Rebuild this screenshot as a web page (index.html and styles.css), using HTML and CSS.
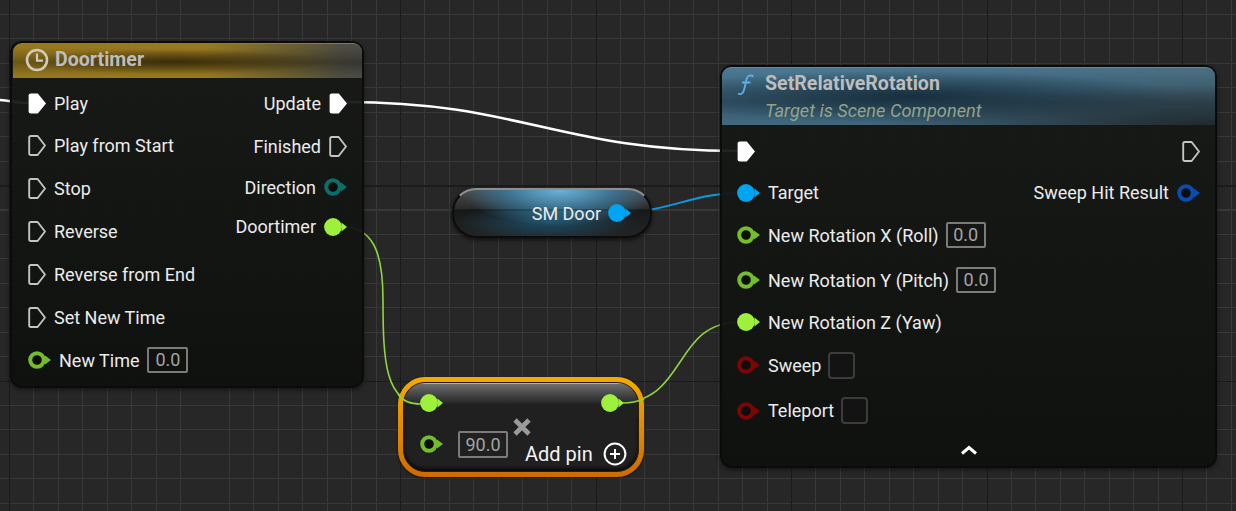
FILE: index.html
```html
<!DOCTYPE html>
<html lang="en">
<head>
<meta charset="utf-8">
<title>Blueprint graph</title>
<link rel="stylesheet" href="styles.css">
</head>
<body>
<svg class="defs" width="0" height="0" aria-hidden="true">
  <symbol id="exec" viewBox="0 0 18 21"><path d="M1.2 2.6Q1.2 1 2.8 1H9.6L17 10.5L9.6 20H2.8Q1.2 20 1.2 18.4Z" fill="none" stroke="#c4c4c4" stroke-width="1.9" stroke-linejoin="round"/></symbol>
  <symbol id="exec-on" viewBox="0 0 18 21"><path d="M.6 2.5Q.6 .4 2.8 .4H9.8L18 10.5L9.8 20.6H2.8Q.6 20.6 .6 18.5Z" fill="#fff"/></symbol>
  <symbol id="data" viewBox="0 0 23 18"><path d="M17.5 4.5L23 9L17.5 13.5Z" fill="currentColor"/><circle cx="9" cy="9" r="8.9" fill="currentColor"/></symbol>
  <symbol id="data-off" viewBox="0 0 23 18"><path d="M17 4.5L23 9L17 13.5Z" fill="currentColor"/><circle cx="9" cy="9" r="6.8" fill="#0c0e0c" stroke="currentColor" stroke-width="4"/></symbol>
</svg>
<main class="canvas">
  <svg class="wires" width="1236" height="511" viewBox="0 0 1236 511" fill="none" aria-hidden="true">
    <path d="M0 100C12 101 18 103 30 103" stroke="#fff" stroke-width="2.5"/>
    <path d="M346 102C520 102 560 151 738 151" stroke="#fff" stroke-width="2.5"/>
    <path d="M620 212C672 212 690 193 740 193" stroke="#0a9ae0" stroke-width="2"/>
    <path d="M342 227C372 227 383 250 383 300C383 360 385 404 422 404" stroke="#8ed63a" stroke-width="1.6"/>
    <path d="M618 403C688 403 672 322 740 322" stroke="#8ed63a" stroke-width="1.6"/>
  </svg>

  <section class="node timer">
    <header class="head head-timer">
      <svg class="icon-clock" width="24" height="24" viewBox="0 0 24 24" fill="none" stroke="#cfcbb8"><circle cx="12" cy="12" r="10" stroke-width="2.6"/><path d="M12 5.5V12.6H18" stroke-width="2.2"/></svg>
      <h2 class="title">Doortimer</h2>
    </header>
    <div class="body body-timer">
      <div class="col col-timer-in">
        <div class="row"><svg class="pin-exec"><use href="#exec-on"/></svg><span>Play</span></div>
        <div class="row"><svg class="pin-exec"><use href="#exec"/></svg><span>Play from Start</span></div>
        <div class="row"><svg class="pin-exec"><use href="#exec"/></svg><span>Stop</span></div>
        <div class="row"><svg class="pin-exec"><use href="#exec"/></svg><span>Reverse</span></div>
        <div class="row"><svg class="pin-exec"><use href="#exec"/></svg><span>Reverse from End</span></div>
        <div class="row"><svg class="pin-exec"><use href="#exec"/></svg><span>Set New Time</span></div>
        <div class="row"><svg class="pin-data green"><use href="#data-off"/></svg><span>New Time</span><span class="field">0.0</span></div>
      </div>
      <div class="col col-timer-out">
        <div class="row"><span>Update</span><svg class="pin-exec"><use href="#exec-on"/></svg></div>
        <div class="row"><span>Finished</span><svg class="pin-exec"><use href="#exec"/></svg></div>
        <div class="row"><span>Direction</span><svg class="pin-data teal"><use href="#data-off"/></svg></div>
        <div class="row"><span>Doortimer</span><svg class="pin-data lime"><use href="#data"/></svg></div>
      </div>
    </div>
  </section>

  <section class="pill">
    <span>SM Door</span><svg class="pin-data blue"><use href="#data"/></svg>
  </section>

  <section class="add">
    <div class="add-inner">
      <div class="add-top">
        <svg class="pin-data lime"><use href="#data"/></svg>
        <svg class="pin-data lime"><use href="#data"/></svg>
      </div>
      <div class="add-bottom">
        <svg class="pin-data green"><use href="#data-off"/></svg>
        <span class="field field-wide">90.0</span>
        <svg class="icon-x" width="18" height="18" viewBox="0 0 18 18"><path d="M2 2L16 16M16 2L2 16" stroke="#9a9a9a" stroke-width="4.6"/></svg>
        <div class="add-pin"><span>Add pin</span><svg width="24" height="24" viewBox="0 0 24 24" fill="none" stroke="#fff" stroke-width="2"><circle cx="12" cy="12" r="10.4"/><path d="M12 7V17M7 12H17"/></svg></div>
      </div>
    </div>
  </section>
  <svg class="wires" width="1236" height="511" viewBox="0 0 1236 511" fill="none" aria-hidden="true">
    <path d="M398 394C403 402 411 404 421 404" stroke="#8ed63a" stroke-width="1.6"/>
    <path d="M623 403C630 403 636 402 644 399" stroke="#8ed63a" stroke-width="1.6"/>
  </svg>

  <section class="node rotation">
    <header class="head head-rotation">
      <svg class="icon-fn" width="18" height="22" viewBox="0 0 18 22" fill="none" stroke="#62b0e8" stroke-width="1.8"><path d="M16.5 2.5C13 .5 10.5 1.5 9.5 5.5L7 16C6 20 3.5 21 1 19.5M5 8.5H13.5"/></svg>
      <div class="head-text">
        <h2 class="title">SetRelativeRotation</h2>
        <p class="subtitle">Target is Scene Component</p>
      </div>
    </header>
    <div class="body body-rotation">
      <div class="col col-rot-in">
        <div class="row"><svg class="pin-exec"><use href="#exec-on"/></svg></div>
        <div class="row"><svg class="pin-data blue"><use href="#data"/></svg><span>Target</span></div>
        <div class="row"><svg class="pin-data green"><use href="#data-off"/></svg><span>New Rotation X (Roll)</span><span class="field">0.0</span></div>
        <div class="row"><svg class="pin-data green"><use href="#data-off"/></svg><span>New Rotation Y (Pitch)</span><span class="field">0.0</span></div>
        <div class="row"><svg class="pin-data lime"><use href="#data"/></svg><span>New Rotation Z (Yaw)</span></div>
        <div class="row"><svg class="pin-data red"><use href="#data-off"/></svg><span>Sweep</span><span class="check"></span></div>
        <div class="row"><svg class="pin-data red"><use href="#data-off"/></svg><span>Teleport</span><span class="check"></span></div>
      </div>
      <div class="col col-rot-out">
        <div class="row"><svg class="pin-exec"><use href="#exec"/></svg></div>
        <div class="row"><span>Sweep Hit Result</span><svg class="pin-data navy"><use href="#data-off"/></svg></div>
      </div>
    </div>
    <svg class="chevron" width="18" height="12" viewBox="0 0 18 12" fill="none" stroke="#fff" stroke-width="3"><path d="M2 9.5L9 3.5L16 9.5"/></svg>
  </section>
</main>
</body>
</html>
```
FILE: styles.css
```css
* { box-sizing: border-box; }
html, body { margin: 0; height: 100%; overflow: hidden; background: #262626; }
.defs { position: absolute; }
h2, p { margin: 0; }

.canvas {
  position: relative;
  width: 1236px;
  height: 511px;
  overflow: hidden;
  font-family: Roboto, "Liberation Sans", sans-serif;
  font-size: 18px;
  color: #ececec;
  background-color: #272727;
  background-image:
    repeating-linear-gradient(90deg, transparent 0 9px, #1b1b1b 9px 10px, transparent 10px 195.5px),
    repeating-linear-gradient(180deg, transparent 0 185.5px, #1b1b1b 185.5px 186.5px, transparent 186.5px 195.5px),
    repeating-linear-gradient(90deg, transparent 0 9px, #383838 9px 10px, transparent 10px 24.4375px),
    repeating-linear-gradient(180deg, transparent 0 14px, #383838 14px 15px, transparent 15px 24.4375px);
}

.wires { position: absolute; left: 0; top: 0; }

.node {
  position: absolute;
  display: flex;
  flex-direction: column;
  border: 2px solid #0b0b0b;
  border-radius: 12px;
  background: linear-gradient(180deg, rgba(23, 25, 23, .94), rgba(14, 16, 13, .95));
  box-shadow: 0 2px 5px rgba(0, 0, 0, .45);
}
.timer { left: 10px; top: 41px; width: 354px; height: 347px; }
.rotation { left: 720px; top: 65px; width: 497px; height: 403px; }

.head {
  display: flex;
  align-items: flex-start;
  border-radius: 9px 9px 0 0;
}
.head-timer {
  height: 35px;
  margin-left: 1px;
  padding: 4px 0 0 12px;
  gap: 6px;
  border-top: 1px solid #8d7a3c;
  background:
    radial-gradient(ellipse 46% 36% at 46% 52%, rgba(40, 28, 4, .72), transparent),
    linear-gradient(180deg, rgba(0,0,0,0) 10%, rgba(0,0,0,.28) 55%, rgba(0,0,0,0) 95%),
    linear-gradient(90deg, #97781f 0%, #98791f 55%, #6a5e30 80%, #4f4d42 94%, #4a4a46 100%);
}
.head-timer .title { margin-top: 1px; }
.head-rotation {
  height: 58px;
  padding: 4px 0 0 15px;
  gap: 10px;
  border-top: 1px solid #5a8aa6;
  background:
    radial-gradient(ellipse 70% 70% at 100% 100%, rgba(30, 38, 42, .95), transparent),
    radial-gradient(ellipse 55% 45% at 38% 50%, rgba(20, 42, 56, .9), transparent),
    linear-gradient(180deg, rgba(0,0,0,0) 5%, rgba(0,0,0,.28) 60%, rgba(0,0,0,.12) 100%),
    linear-gradient(90deg, #4a7893 0%, #477189 70%, #4a6d80 100%);
}
.head-text { margin-top: 1px; }
.icon-clock { flex: none; }
.icon-fn { margin-top: 2px; flex: none; }
.title { font-size: 19.6px; line-height: 22px; font-weight: 700; color: #bdbdbd; }
.subtitle { margin-top: 6px; font-size: 18.2px; line-height: 20px; font-style: italic; color: #94a38a; }

.body { display: flex; justify-content: space-between; }
.body-timer { padding: 3.6px 15px 0 16px; }
.body-rotation { padding: 5px 15px 0 15px; }

.col { display: grid; align-items: center; }
.col-timer-in { grid-auto-rows: 42.85px; }
.col-timer-out { grid-template-rows: 43px 43px 39px 40px; justify-items: end; align-content: start; }
.col-rot-in { grid-template-rows: 42px 41px 44px 46px 38px 48px 43px; }
.col-rot-out { grid-template-rows: 42px 41px; justify-items: end; align-content: start; }

.row { display: flex; align-items: center; gap: 8px; white-space: nowrap; }
.col-rot-in .field { width: 40px; margin-left: -1px; }
.col-rot-in .check { margin-left: -1px; }

.pin-exec { width: 18px; height: 21px; flex: none; }
.pin-data { width: 23px; height: 18px; flex: none; }
.green { color: #74bd2c; }
.lime { color: #9df03c; }
.teal { color: #0b6e68; }
.blue { color: #00a5f2; }
.navy { color: #0a4cb0; }
.red { color: #7c0505; }

.field {
  display: block;
  width: 41px;
  height: 26px;
  border: 2px solid #7b7b7b;
  border-radius: 2px;
  text-align: center;
  line-height: 22px;
  color: #a4a4a4;
}
.field-wide { width: 50px; height: 27px; line-height: 23px; }
.check {
  display: block;
  width: 27px;
  height: 27px;
  border: 2px solid #3c3c3c;
  border-radius: 4px;
  background: #121312;
}
.chevron { position: absolute; left: 238px; bottom: 10px; }

.pill {
  position: absolute;
  left: 452px;
  top: 188px;
  width: 200px;
  height: 50px;
  display: flex;
  align-items: center;
  justify-content: flex-end;
  gap: 7px;
  padding: 0 19px 0 0;
  border: 2px solid #0c0c0c;
  border-top-color: #8e8e8e;
  border-radius: 24px;
  box-shadow: 0 2px 4px rgba(0, 0, 0, .6);
  background:
    linear-gradient(180deg, transparent 0 42%, rgba(0, 0, 0, .22) 42% 46%, transparent 46%),
    radial-gradient(ellipse 50% 78% at 54% 0%, rgba(105, 178, 218, 1), rgba(60, 130, 170, .7) 55%, transparent),
    radial-gradient(ellipse 46% 42% at 48% 70%, rgba(28, 88, 118, .8), transparent),
    linear-gradient(180deg, #4a4c4c 0%, #2a2c2c 40%, #181a1a 46%, #232323 100%);
}

.add {
  position: absolute;
  left: 398px;
  top: 377px;
  width: 246px;
  height: 100px;
  padding: 5px;
  border-radius: 27px;
  background: linear-gradient(180deg, #f3ab00, #cf6a00);
  box-shadow: 0 1px 3px rgba(0, 0, 0, .5);
}
.add-inner {
  height: 100%;
  display: flex;
  flex-direction: column;
  border: 1px solid #2a1e08;
  border-radius: 22px;
  overflow: hidden;
  background: #1f201f;
  box-shadow: inset 0 -3px 3px #0d0d0d;
}
.add-top {
  height: 35px;
  flex: none;
  display: flex;
  justify-content: space-between;
  padding: 10px 14px 0 16px;
  border-top: 1px solid #b0b0b0;
  background: linear-gradient(180deg, #6e6e6e 0%, #3a3a3a 40%, #2a2a2a 55%, #1f201f 60%);
}
.add-bottom {
  position: relative;
  display: flex;
  align-items: flex-start;
  padding: 17px 0 0 16px;
}
.add-bottom .field { margin: -4px 0 0 15px; }
.icon-x { position: absolute; left: 109px; top: 0; }
.add-pin {
  display: flex;
  align-items: center;
  gap: 10px;
  position: absolute;
  left: 121px;
  top: 24px;
  font-size: 20px;
  color: #f4f4f4;
}
```
